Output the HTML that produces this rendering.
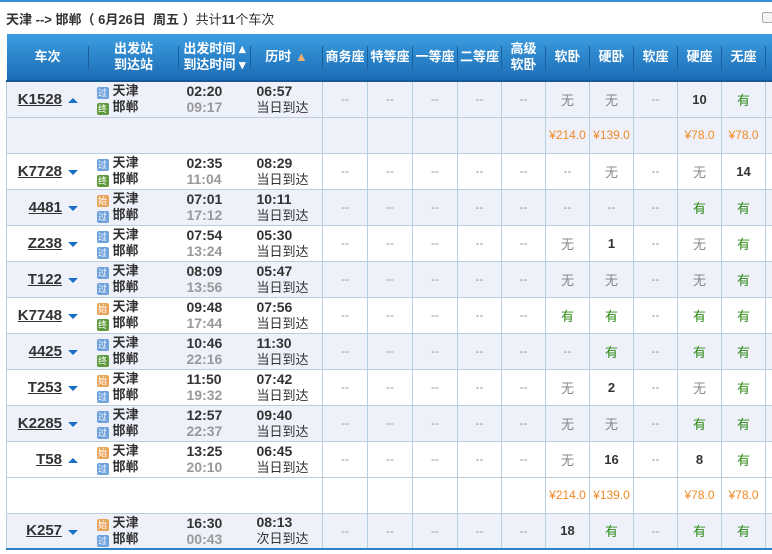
<!DOCTYPE html>
<html><head><meta charset="utf-8"><style>
*{margin:0;padding:0;box-sizing:border-box}
body{width:772px;height:554px;overflow:hidden;background:#fff;font-family:"Liberation Sans","Noto Sans CJK SC",sans-serif;position:relative}
.top{position:absolute;left:0;top:0;width:772px;height:2px;background:#3a8fd0}
.title{position:absolute;left:6px;top:9px;font-size:13px;color:#333}
.title b{font-weight:bold}
.cb{position:absolute;left:762px;top:12px;width:11px;height:11px;border:1px solid #aaa;border-radius:2px;background:#f4f4f4}
table{position:absolute;left:6px;top:34px;border-collapse:collapse;table-layout:fixed;width:780px}
th{height:47px;background:linear-gradient(#3d9de0,#1b6db5);color:#fff;font-size:13px;font-weight:bold;line-height:16px;position:relative;border-bottom:2px solid #175a98}
th.s::after{content:"";position:absolute;right:0;top:12px;height:24px;border-right:1px solid #1a5f9e}
td{height:36px;border-bottom:1px solid #b9cfe0;text-align:center;font-size:12px;color:#999;vertical-align:middle;padding:0}
td.g{border-left:1px solid #b9cfe0}
tr.a td{background:#eef1fa}
td.first{border-left:1px solid #b9cfe0;text-align:left}
.tn{display:inline-block;width:55px;text-align:right;font-size:15px;font-weight:bold;color:#333;text-decoration:underline}
.ar{display:inline-block;width:0;height:0;border-left:5px solid transparent;border-right:5px solid transparent;margin-left:6px;vertical-align:middle}
.up{border-bottom:5px solid #1a6fc8}
.dn{border-top:5px solid #1a6fc8}
.st{text-align:left;padding-left:8px;font-size:13px;font-weight:bold;color:#333;line-height:16px}
.ic{display:inline-block;width:12px;height:12px;vertical-align:-1px;margin-right:4px;font-size:9px;line-height:12px;color:#fff;text-align:center;border-radius:2px;font-weight:normal}
.p{background:#6fa2dc}.s1{background:#e8a55a}.e{background:#5e9a3c}
.tm{text-align:left;padding-left:8px;font-size:14px;font-weight:bold;color:#333;line-height:16px}
.tm i{font-style:normal;color:#999}
.du{text-align:left;padding-left:6px;font-size:14px;color:#333;line-height:16px}
.du b{font-weight:bold}
.du span{font-size:13px}
.n{font-weight:bold;color:#333;font-size:13px}
.y{color:#2a8a12;font-size:13px}
.w{color:#888;font-size:13px}
.pr{color:#f08a24;font-size:12px}
tr.last td{border-bottom:2px solid #2d84c4}
</style></head><body>
<div class="top"></div>
<div class="title"><b>天津 --&gt; 邯郸（ 6月26日 &nbsp;周五 ）</b>共计<b>11</b>个车次</div>
<div class="cb"></div>
<table>
<colgroup><col style="width:82px"><col style="width:90px"><col style="width:72px"><col style="width:72px"><col style="width:45px"><col style="width:45px"><col style="width:45px"><col style="width:44px"><col style="width:44px"><col style="width:44px"><col style="width:44px"><col style="width:44px"><col style="width:44px"><col style="width:44px"><col style="width:61px"></colgroup>
<tr><th class="s">车次</th><th class="s">出发站<br>到达站</th><th class="s">出发时间 ▴<br>到达时间 ▾</th><th class="s">历时 <span style="color:#f0b070">▲</span></th><th class="s">商务座</th><th class="s">特等座</th><th class="s">一等座</th><th class="s">二等座</th><th class="s">高级<br>软卧</th><th class="s">软卧</th><th class="s">硬卧</th><th class="s">软座</th><th class="s">硬座</th><th class="s">无座</th><th></th></tr>

<tr class="a"><td class="first"><span class="tn">K1528</span><span class="ar up"></span></td><td class="st"><span class="ic p">过</span>天津<br><span class="ic e">终</span>邯郸</td><td class="tm">02:20<br><i>09:17</i></td><td class="du"><b>06:57</b><br><span>当日到达</span></td><td class="g">--</td><td class="g">--</td><td class="g">--</td><td class="g">--</td><td class="g">--</td><td class="g w">无</td><td class="g w">无</td><td class="g">--</td><td class="g n">10</td><td class="g y">有</td><td class="g"></td></tr>
<tr class="a"><td class="first"></td><td></td><td></td><td></td><td class="g"></td><td class="g"></td><td class="g"></td><td class="g"></td><td class="g"></td><td class="g pr">¥214.0</td><td class="g pr">¥139.0</td><td class="g"></td><td class="g pr">¥78.0</td><td class="g pr">¥78.0</td><td class="g"></td></tr>

<tr><td class="first"><span class="tn">K7728</span><span class="ar dn"></span></td><td class="st"><span class="ic p">过</span>天津<br><span class="ic e">终</span>邯郸</td><td class="tm">02:35<br><i>11:04</i></td><td class="du"><b>08:29</b><br><span>当日到达</span></td><td class="g">--</td><td class="g">--</td><td class="g">--</td><td class="g">--</td><td class="g">--</td><td class="g">--</td><td class="g w">无</td><td class="g">--</td><td class="g w">无</td><td class="g n">14</td><td class="g"></td></tr>

<tr class="a"><td class="first"><span class="tn">4481</span><span class="ar dn"></span></td><td class="st"><span class="ic s1">始</span>天津<br><span class="ic p">过</span>邯郸</td><td class="tm">07:01<br><i>17:12</i></td><td class="du"><b>10:11</b><br><span>当日到达</span></td><td class="g">--</td><td class="g">--</td><td class="g">--</td><td class="g">--</td><td class="g">--</td><td class="g">--</td><td class="g">--</td><td class="g">--</td><td class="g y">有</td><td class="g y">有</td><td class="g"></td></tr>

<tr><td class="first"><span class="tn">Z238</span><span class="ar dn"></span></td><td class="st"><span class="ic p">过</span>天津<br><span class="ic p">过</span>邯郸</td><td class="tm">07:54<br><i>13:24</i></td><td class="du"><b>05:30</b><br><span>当日到达</span></td><td class="g">--</td><td class="g">--</td><td class="g">--</td><td class="g">--</td><td class="g">--</td><td class="g w">无</td><td class="g n">1</td><td class="g">--</td><td class="g w">无</td><td class="g y">有</td><td class="g"></td></tr>

<tr class="a"><td class="first"><span class="tn">T122</span><span class="ar dn"></span></td><td class="st"><span class="ic p">过</span>天津<br><span class="ic p">过</span>邯郸</td><td class="tm">08:09<br><i>13:56</i></td><td class="du"><b>05:47</b><br><span>当日到达</span></td><td class="g">--</td><td class="g">--</td><td class="g">--</td><td class="g">--</td><td class="g">--</td><td class="g w">无</td><td class="g w">无</td><td class="g">--</td><td class="g w">无</td><td class="g y">有</td><td class="g"></td></tr>

<tr><td class="first"><span class="tn">K7748</span><span class="ar dn"></span></td><td class="st"><span class="ic s1">始</span>天津<br><span class="ic e">终</span>邯郸</td><td class="tm">09:48<br><i>17:44</i></td><td class="du"><b>07:56</b><br><span>当日到达</span></td><td class="g">--</td><td class="g">--</td><td class="g">--</td><td class="g">--</td><td class="g">--</td><td class="g y">有</td><td class="g y">有</td><td class="g">--</td><td class="g y">有</td><td class="g y">有</td><td class="g"></td></tr>

<tr class="a"><td class="first"><span class="tn">4425</span><span class="ar dn"></span></td><td class="st"><span class="ic p">过</span>天津<br><span class="ic e">终</span>邯郸</td><td class="tm">10:46<br><i>22:16</i></td><td class="du"><b>11:30</b><br><span>当日到达</span></td><td class="g">--</td><td class="g">--</td><td class="g">--</td><td class="g">--</td><td class="g">--</td><td class="g">--</td><td class="g y">有</td><td class="g">--</td><td class="g y">有</td><td class="g y">有</td><td class="g"></td></tr>

<tr><td class="first"><span class="tn">T253</span><span class="ar dn"></span></td><td class="st"><span class="ic s1">始</span>天津<br><span class="ic p">过</span>邯郸</td><td class="tm">11:50<br><i>19:32</i></td><td class="du"><b>07:42</b><br><span>当日到达</span></td><td class="g">--</td><td class="g">--</td><td class="g">--</td><td class="g">--</td><td class="g">--</td><td class="g w">无</td><td class="g n">2</td><td class="g">--</td><td class="g w">无</td><td class="g y">有</td><td class="g"></td></tr>

<tr class="a"><td class="first"><span class="tn">K2285</span><span class="ar dn"></span></td><td class="st"><span class="ic p">过</span>天津<br><span class="ic p">过</span>邯郸</td><td class="tm">12:57<br><i>22:37</i></td><td class="du"><b>09:40</b><br><span>当日到达</span></td><td class="g">--</td><td class="g">--</td><td class="g">--</td><td class="g">--</td><td class="g">--</td><td class="g w">无</td><td class="g w">无</td><td class="g">--</td><td class="g y">有</td><td class="g y">有</td><td class="g"></td></tr>

<tr><td class="first"><span class="tn">T58</span><span class="ar up"></span></td><td class="st"><span class="ic s1">始</span>天津<br><span class="ic p">过</span>邯郸</td><td class="tm">13:25<br><i>20:10</i></td><td class="du"><b>06:45</b><br><span>当日到达</span></td><td class="g">--</td><td class="g">--</td><td class="g">--</td><td class="g">--</td><td class="g">--</td><td class="g w">无</td><td class="g n">16</td><td class="g">--</td><td class="g n">8</td><td class="g y">有</td><td class="g"></td></tr>
<tr><td class="first"></td><td></td><td></td><td></td><td class="g"></td><td class="g"></td><td class="g"></td><td class="g"></td><td class="g"></td><td class="g pr">¥214.0</td><td class="g pr">¥139.0</td><td class="g"></td><td class="g pr">¥78.0</td><td class="g pr">¥78.0</td><td class="g"></td></tr>

<tr class="a last"><td class="first"><span class="tn">K257</span><span class="ar dn"></span></td><td class="st"><span class="ic s1">始</span>天津<br><span class="ic p">过</span>邯郸</td><td class="tm">16:30<br><i>00:43</i></td><td class="du"><b>08:13</b><br><span>次日到达</span></td><td class="g">--</td><td class="g">--</td><td class="g">--</td><td class="g">--</td><td class="g">--</td><td class="g n">18</td><td class="g y">有</td><td class="g">--</td><td class="g y">有</td><td class="g y">有</td><td class="g"></td></tr>
</table>
</body></html>
